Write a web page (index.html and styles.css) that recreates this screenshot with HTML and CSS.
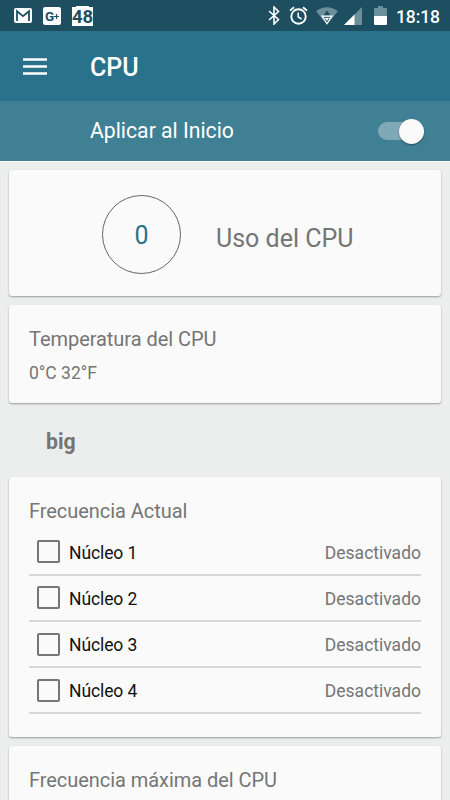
FILE: index.html
```html
<!DOCTYPE html>
<html lang="es">
<head>
<meta charset="utf-8">
<title>CPU</title>
<link rel="stylesheet" href="styles.css">
</head>
<body>
<header class="status">
  <div class="status-left">
    <svg class="ic-mail" width="18" height="15" viewBox="0 0 18 15"><rect width="18" height="15" rx="2" fill="#fff"/><path d="M3 13V3.2L9 8.2L15 3.2V13" fill="none" stroke="#1d4f60" stroke-width="1.8"/></svg>
    <div class="gplus">G<svg width="5" height="5" viewBox="0 0 5 5"><path d="M2.5 0V5M0 2.5H5" stroke="#1d4f60" stroke-width="1.2"/></svg></div>
    <div class="level">48</div>
  </div>
  <div class="status-right">
    <svg class="ic" width="12" height="19" viewBox="0 0 12 19"><path d="M1 5L10.5 13.5L6 18V1L10.5 5.5L1 14" fill="none" stroke="#fff" stroke-width="1.6"/></svg>
    <svg class="ic ic-alarm" width="19" height="19" viewBox="0 0 19 19" fill="none" stroke="#fff"><circle cx="9.5" cy="10.5" r="7.2" stroke-width="1.9"/><path d="M9.2 6.5V11L12.6 13" stroke-width="1.5"/><path d="M1 4.6L5 1.2M18 4.6L14 1.2" stroke-width="1.8"/></svg>
    <svg class="ic ic-wifi" width="22" height="18" viewBox="0 0 22 18"><path d="M0 4Q11-3.6 22 4L11 18Z" fill="#6b909c"/><path d="M11 3.5L14.5 8.5H7.5Z" fill="#1d4f60"/><path d="M5 8.5H17L11 17.5Z" fill="#fff"/><path d="M7.8 10.3H14.2M9 11.5L11 15L13 11.5" fill="none" stroke="#1d4f60" stroke-width="1"/></svg>
    <svg class="ic ic-signal" width="18" height="18" viewBox="0 0 18 18"><path d="M18 0V18H0Z" fill="#6b909c"/><path d="M10.5 7.5V18H0Z" fill="#fff"/></svg>
    <svg class="ic ic-battery" width="13" height="19" viewBox="0 0 13 19"><path d="M1 2H4V0H9V2H12Q13 2 13 3V10H0V3Q0 2 1 2Z" fill="#6b909c"/><path d="M0 10H13V18Q13 19 12 19H1Q0 19 0 18Z" fill="#fff"/></svg>
    <span class="clock">18:18</span>
  </div>
</header>
<div class="appbar">
  <svg class="menu" width="24" height="17" viewBox="0 0 24 17"><path d="M0 1.5H24M0 8.5H24M0 15.5H24" stroke="#fff" stroke-width="2.5"/></svg>
  <h1>CPU</h1>
</div>
<div class="boot">
  <span>Aplicar al Inicio</span>
  <div class="switch"><div class="knob"></div></div>
</div>
<main>
  <section class="card usage">
    <div class="ring">0</div>
    <span class="usage-label">Uso del CPU</span>
  </section>
  <section class="card temp">
    <h2>Temperatura del CPU</h2>
    <p>0°C 32°F</p>
  </section>
  <h3>big</h3>
  <section class="card cores">
    <h2>Frecuencia Actual</h2>
    <div class="row"><span class="box"></span><span class="core">Núcleo 1</span><span class="state">Desactivado</span></div>
    <div class="row"><span class="box"></span><span class="core">Núcleo 2</span><span class="state">Desactivado</span></div>
    <div class="row"><span class="box"></span><span class="core">Núcleo 3</span><span class="state">Desactivado</span></div>
    <div class="row"><span class="box"></span><span class="core">Núcleo 4</span><span class="state">Desactivado</span></div>
  </section>
  <section class="card max">
    <h2>Frecuencia máxima del CPU</h2>
  </section>
</main>
</body>
</html>
```
FILE: styles.css
```css
* { box-sizing: border-box; margin: 0; }
body {
  width: 450px;
  height: 800px;
  overflow: hidden;
  background: #eceeee;
  font-family: Roboto, "Liberation Sans", sans-serif;
  color: #757575;
}
svg { display: block; }
.status {
  height: 31px;
  background: #1d4f60;
  display: flex;
  justify-content: space-between;
  padding: 0 10px 0 14px;
}
.status-left, .status-right { display: flex; }
.ic-mail { margin-top: 8px; }
.gplus {
  width: 18px;
  height: 18px;
  margin: 7px 0 0 11px;
  border-radius: 2px;
  background: #fff;
  color: #1d4f60;
  font-size: 13.5px;
  font-weight: 700;
  display: flex;
  align-items: center;
  justify-content: center;
}
.level {
  width: 21px;
  height: 20px;
  margin: 6px 0 0 11px;
  background: linear-gradient(#fff, #fff) 4px 0 / 13px 2px no-repeat, linear-gradient(#fff, #fff) 0 1px / 21px 19px no-repeat;
  color: #1d4f60;
  font-size: 18.5px;
  font-weight: 700;
  line-height: 22px;
  text-align: center;
}
.ic { margin-top: 6px; }
.ic-alarm { margin-left: 9px; }
.ic-wifi { margin: 7px 0 0 8px; }
.ic-signal { margin: 7px 0 0 6px; }
.ic-battery { margin-left: 12px; }
.clock {
  width: 44px;
  margin-left: 9px;
  color: #fff;
  font-size: 17.5px;
  font-weight: 500;
  line-height: 34px;
  letter-spacing: -.1px;
  white-space: nowrap;
}
.appbar {
  height: 70px;
  background: #2a728b;
  display: flex;
  align-items: center;
  padding-left: 23px;
}
h1 {
  margin: 3px 0 0 43px;
  color: #fff;
  font-size: 25px;
  font-weight: 500;
  line-height: 30px;
}
.boot {
  height: 60px;
  background: #408095;
  color: #fff;
  font-size: 21.2px;
  line-height: 24px;
  display: flex;
  align-items: center;
  justify-content: space-between;
  padding: 0 26px 0 90px;
}
.switch {
  width: 46px;
  height: 18px;
  border-radius: 9px;
  background: #80a9b7;
  display: flex;
  align-items: center;
  justify-content: flex-end;
}
.knob {
  width: 25px;
  height: 25px;
  border-radius: 50%;
  background: #fafafa;
  box-shadow: 0 1px 2px rgba(0, 0, 0, .4);
}
main { padding: 9px 9px 0; box-shadow: inset 0 1px #fff; }
.card {
  background: #fafafa;
  border-radius: 3px;
  box-shadow: 0 1px 2px rgba(0, 0, 0, .35);
  padding: 0 20px;
  margin-bottom: 9px;
}
.usage {
  height: 126px;
  display: flex;
  align-items: center;
  padding-left: 93px;
}
.ring {
  width: 79px;
  height: 79px;
  border: 1px solid #666;
  border-radius: 50%;
  margin-top: 3px;
  color: #2a728b;
  font-size: 25px;
  line-height: 79px;
  text-align: center;
}
.usage-label { margin: 11px 0 0 35px; font-size: 25px; }
h2 { font-size: 20px; font-weight: 400; line-height: 24px; letter-spacing: -.05px; }
.temp { height: 98px; padding-top: 22px; margin-bottom: 0; }
.temp p { margin-top: 12px; font-size: 17.5px; line-height: 21px; }
h3 {
  height: 74px;
  padding-left: 37px;
  font-size: 21.2px;
  font-weight: 700;
  line-height: 77px;
}
.cores { height: 260px; padding-top: 22px; }
.cores h2 { margin-bottom: 6.4px; }
.row {
  height: 46.25px;
  border-bottom: 2px solid #d8d8d8;
  display: flex;
  align-items: center;
  padding-left: 8px;
  font-size: 17.5px;
}
.box {
  width: 23px;
  height: 23px;
  border: 2px solid #757575;
  border-radius: 2px;
}
.core, .state { padding-top: 2px; }
.core { margin-left: 9px; color: #111; letter-spacing: -.1px; }
.state { margin-left: auto; }
.max { height: 54px; padding-top: 22px; margin-bottom: 0; border-radius: 3px 3px 0 0; }
```
